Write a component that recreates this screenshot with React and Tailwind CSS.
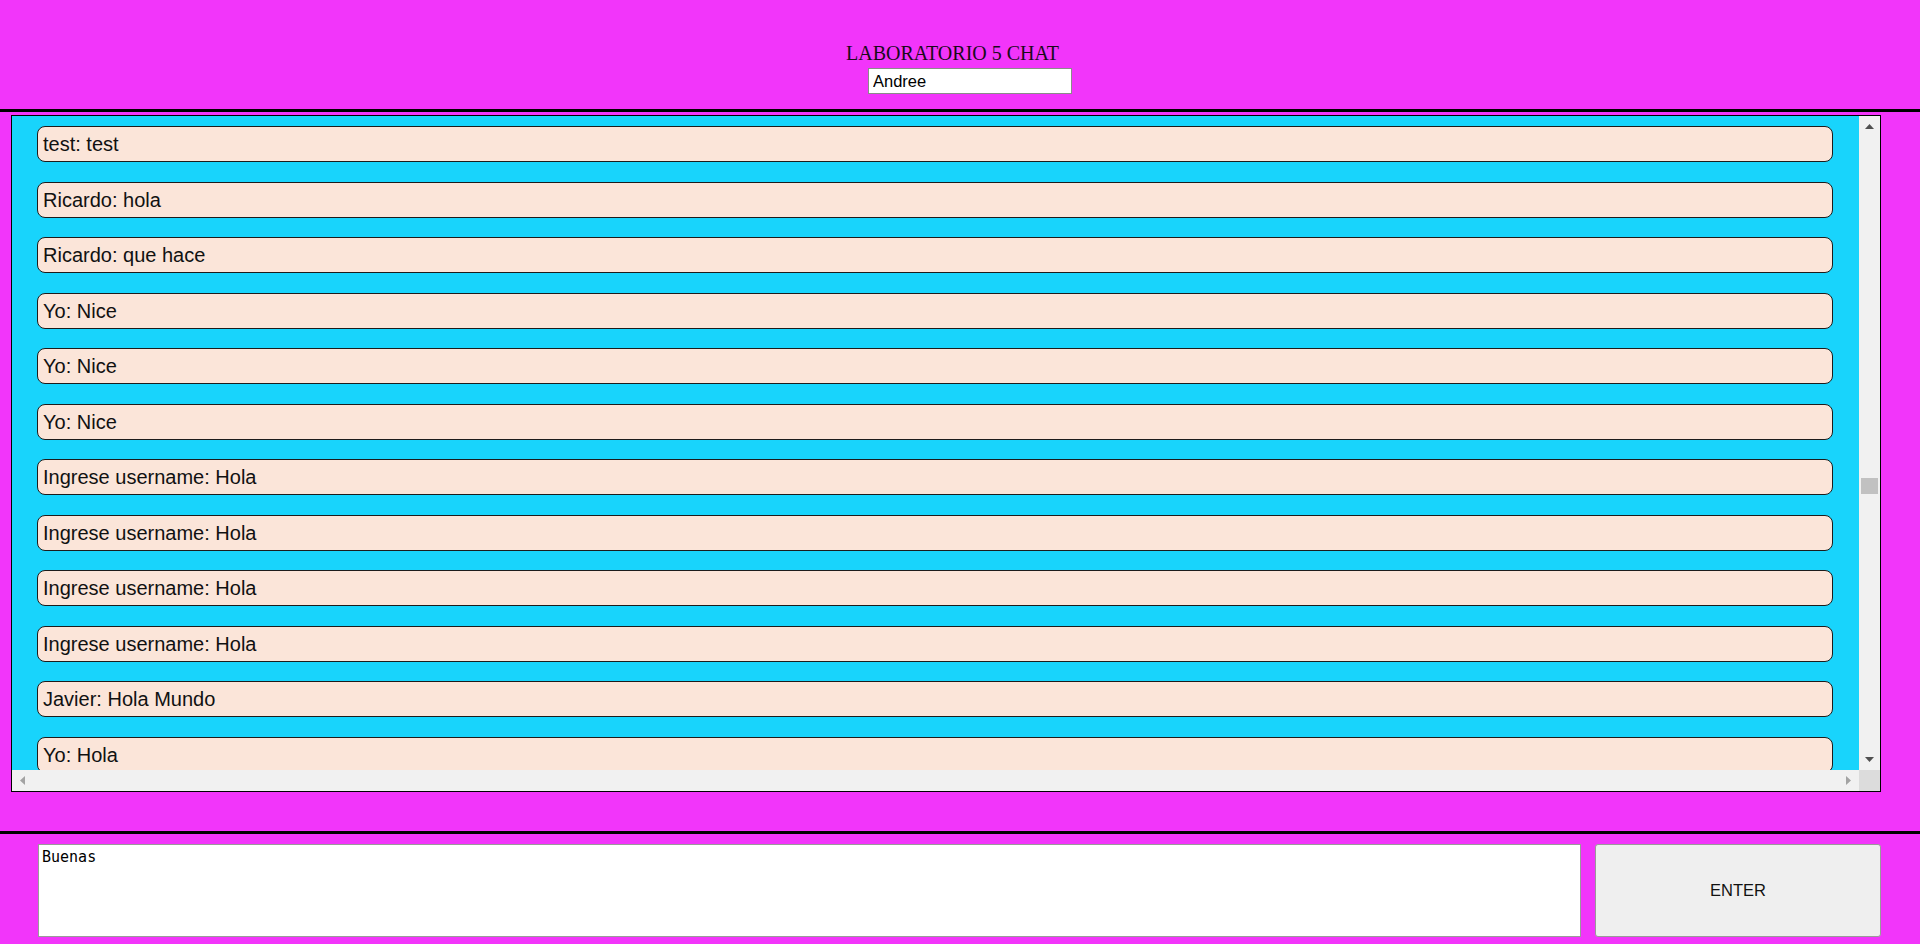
import React from "react";

const messages = [
  "test: test",
  "Ricardo: hola",
  "Ricardo: que hace",
  "Yo: Nice",
  "Yo: Nice",
  "Yo: Nice",
  "Ingrese username: Hola",
  "Ingrese username: Hola",
  "Ingrese username: Hola",
  "Ingrese username: Hola",
  "Javier: Hola Mundo",
  "Yo: Hola",
];

const Arrow = ({ dir, color }) => {
  const pts = {
    up: "0,5 4.5,0 9,5",
    down: "0,0 9,0 4.5,5",
    left: "5,0 5,9 0,4.5",
    right: "0,0 5,4.5 0,9",
  }[dir];
  const vertical = dir === "up" || dir === "down";
  return (
    <svg
      width={vertical ? 9 : 5}
      height={vertical ? 5 : 9}
      viewBox={vertical ? "0 0 9 5" : "0 0 5 9"}
    >
      <polygon points={pts} fill={color} />
    </svg>
  );
};

const App = () => {
  return (
    <div
      className="w-[1920px] h-[944px] bg-[#f235fa] flex flex-col overflow-hidden"
      style={{ fontFamily: '"Liberation Sans", Arial, sans-serif' }}
    >
      {/* Header */}
      <div className="h-[112px] shrink-0 border-b-[3px] border-black flex flex-col items-center pt-[42px]">
        <h3
          className="mr-[15px] text-[20px] leading-[22px] text-[#1a0a1a]"
          style={{ fontFamily: '"Liberation Serif", "Times New Roman", serif' }}
        >
          LABORATORIO 5 CHAT
        </h3>
        <input
          type="text"
          defaultValue="Andree"
          className="ml-[20px] mt-[4px] w-[204px] h-[26px] bg-white border border-[#8a8a8a] px-[4px] text-[16.5px] text-black outline-none"
        />
      </div>

      {/* Chat area */}
      <div className="pt-[3px] pl-[11px] h-[722px] shrink-0 border-b-[3px] border-black">
        <div className="w-[1870px] h-[677px] border border-black flex flex-col">
          <div className="flex flex-1 min-h-0">
            <div className="flex-1 bg-[#18d4fc] overflow-hidden pt-[10px] pl-[25px] pr-[26px]">
              {messages.map((m, i) => (
                <div
                  key={i}
                  className="h-[36px] mb-[19.5px] bg-[#fbe5d9] border border-[#1c1c1c] rounded-[8px] px-[5px] text-[20px] leading-[34px] text-[#111]"
                >
                  {m}
                </div>
              ))}
            </div>
            {/* vertical scrollbar */}
            <div className="w-[21px] bg-[#f1f1f1] flex flex-col">
              <div className="h-[21px] flex items-center justify-center">
                <Arrow dir="up" color="#505050" />
              </div>
              <div className="h-[341px]" />
              <div className="h-[16px] mx-[2px] bg-[#c1c1c1]" />
              <div className="flex-1" />
              <div className="h-[21px] flex items-center justify-center">
                <Arrow dir="down" color="#505050" />
              </div>
            </div>
          </div>
          {/* horizontal scrollbar */}
          <div className="h-[21px] flex">
            <div className="flex-1 bg-[#f1f1f1] flex items-center justify-between">
              <div className="w-[21px] flex items-center justify-center">
                <Arrow dir="left" color="#a3a3a3" />
              </div>
              <div className="w-[21px] flex items-center justify-center">
                <Arrow dir="right" color="#a3a3a3" />
              </div>
            </div>
            <div className="w-[21px] bg-[#dcdcdc]" />
          </div>
        </div>
      </div>

      {/* Input bar */}
      <div className="flex pt-[10px] pl-[38px]">
        <textarea
          defaultValue="Buenas"
          className="w-[1543px] h-[93px] bg-white border border-[#9a9a9a] px-[3px] pt-[4px] pb-[2px] text-[15px] leading-[17px] text-black resize-none outline-none"
          style={{ fontFamily: '"DejaVu Sans Mono", "Liberation Mono", monospace' }}
        />
        <button
          type="button"
          className="ml-[14px] w-[286px] h-[93px] bg-[#efefef] border border-[#9a9a9a] rounded-[3px] text-[16.5px] text-[#111]"
        >
          ENTER
        </button>
      </div>
    </div>
  );
};

export default App;
